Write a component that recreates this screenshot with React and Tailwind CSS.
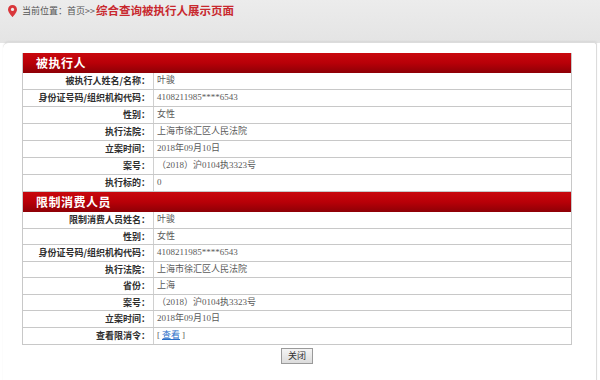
import React from "react";

const sec1 = [
  ["被执行人姓名/名称：", "叶骏"],
  ["身份证号码/组织机构代码：", "4108211985****6543"],
  ["性别：", "女性"],
  ["执行法院：", "上海市徐汇区人民法院"],
  ["立案时间：", "2018年09月10日"],
  ["案号：", "（2018）沪0104执3323号"],
  ["执行标的：", "0"],
];

const sec2 = [
  ["限制消费人员姓名：", "叶骏"],
  ["性别：", "女性"],
  ["身份证号码/组织机构代码：", "4108211985****6543"],
  ["执行法院：", "上海市徐汇区人民法院"],
  ["省份：", "上海"],
  ["案号：", "（2018）沪0104执3323号"],
  ["立案时间：", "2018年09月10日"],
];

const font = { fontFamily: '"Liberation Serif", "Noto Sans CJK SC", serif' };

function Row({ label, value, h }) {
  return (
    <div className={`flex border-b border-[#c8c8c8] ${h}`}>
      <div className="w-[131px] shrink-0 border-r border-[#d0d0d0] flex items-center justify-end pr-[3px] text-[9px] font-bold text-[#2e2e2e] font-['Noto_Sans_CJK_SC',sans-serif]">
        {label}
      </div>
      <div className="flex-1 flex items-center pl-[3px] text-[9px] text-[#5a5a5a]" style={font}>
        {value}
      </div>
    </div>
  );
}

function Header({ title }) {
  return (
    <div className="h-[20px] bg-gradient-to-b from-[#c9080d] via-[#b80008] to-[#8e0006] flex items-center pl-[13px] text-white text-[12px] font-bold tracking-[0.5px] font-['Noto_Sans_CJK_SC',sans-serif]">
      {title}
    </div>
  );
}

export default function App() {
  return (
    <div className="w-[600px] h-[380px] bg-white overflow-hidden relative">
      <div className="h-[43px] bg-gradient-to-b from-[#ececec] to-[#e4e4e4] flex items-start pt-[2px] pl-[8px]">
        <div className="flex items-center h-[18px]">
          <svg width="9" height="12" viewBox="0 0 9 12" className="mr-[5px]">
            <path d="M4.5 0C2 0 0 2 0 4.4 0 7.5 4.5 12 4.5 12S9 7.5 9 4.4C9 2 7 0 4.5 0z" fill="#d9373b" />
            <circle cx="4.5" cy="4.4" r="1.6" fill="#ececec" />
          </svg>
          <span className="text-[9px] text-[#555] font-['Noto_Sans_CJK_SC',sans-serif]">当前位置：首页&gt;&gt;</span>
          <span className="text-[11.5px] font-bold text-[#c8282e] font-['Noto_Sans_CJK_SC',sans-serif] ml-[1px]">综合查询被执行人展示页面</span>
        </div>
      </div>
      <div className="mx-[3px] -mt-[1px] bg-white rounded-tl-[6px] rounded-tr-[3px] border-t border-r border-[#dcdcdc] shadow-[0_-1px_2px_rgba(0,0,0,0.06)] pt-[10px] pl-[19px] h-[340px]">
        <div className="w-[550px]">
          <div className="border-l border-r border-b border-[#c8c8c8]">
            <Header title="被执行人" />
            {sec1.map(([l, v]) => (
              <Row key={l + v} label={l} value={v} h="h-[17px]" />
            ))}
            <Header title="限制消费人员" />
            {sec2.map(([l, v]) => (
              <Row key={l + v + "2"} label={l} value={v} h="h-[16.5px]" />
            ))}
            <div className="flex h-[16px]">
              <div className="w-[131px] shrink-0 border-r border-[#d0d0d0] flex items-center justify-end pr-[3px] text-[9px] font-bold text-[#2e2e2e] font-['Noto_Sans_CJK_SC',sans-serif]">
                查看限消令：
              </div>
              <div className="flex-1 flex items-center pl-[3px] text-[9px] text-[#5a5a5a]" style={font}>
                [<span className="text-[#2a6fc9] underline mx-[2px]">查看</span>]
              </div>
            </div>
          </div>
          <div className="flex justify-center mt-[3px]">
            <button className="w-[32px] h-[16px] border border-[#9a9a9a] bg-gradient-to-b from-[#f4f4f4] to-[#dcdcdc] text-[9px] text-[#333] flex items-center justify-center font-['Noto_Sans_CJK_SC',sans-serif]">
              关闭
            </button>
          </div>
        </div>
      </div>
    </div>
  );
}
